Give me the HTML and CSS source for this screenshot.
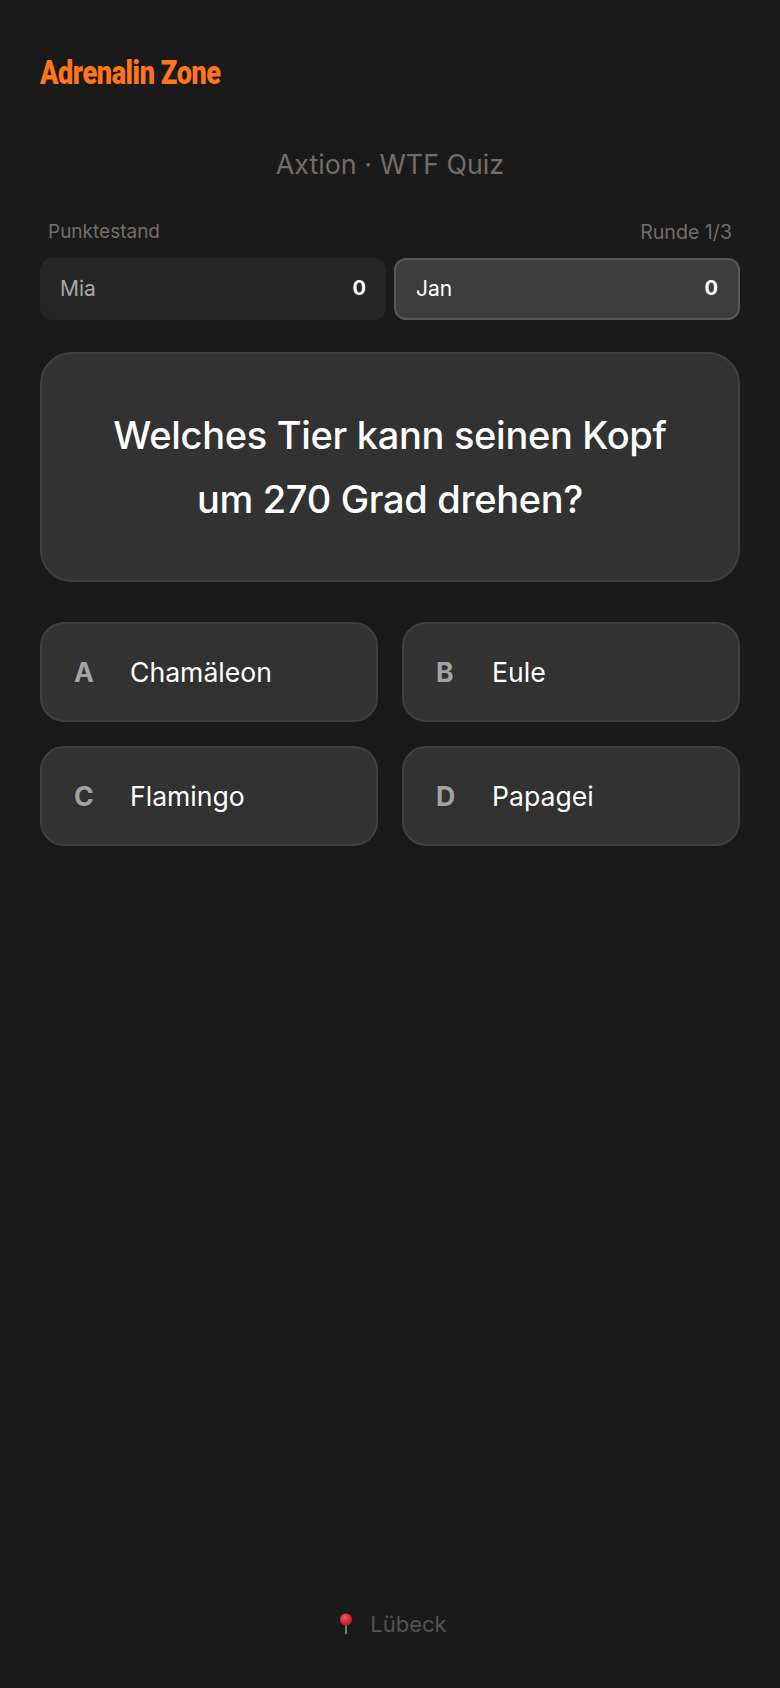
FILE: index.html
```html
<!DOCTYPE html>
<html lang="de">
    <head>
        <meta charset="utf-8" />
        <meta name="viewport" content="width=device-width, initial-scale=1" />
        <title>Adrenalin Zone</title>
        <link rel="stylesheet" href="styles.css">
    </head>
    <body>
        <div class="page">
            <div class="logo">Adrenalin Zone</div>
            <h1 class="game-title">Axtion · WTF Quiz</h1>

            <div class="score-head">
                <span>Punktestand</span>
                <span class="round">Runde 1/3</span>
            </div>
            <div class="scores">
                <div class="score">
                    <span>Mia</span>
                    <span class="points">0</span>
                </div>
                <div class="score active">
                    <span>Jan</span>
                    <span class="points">0</span>
                </div>
            </div>

            <div class="question">Welches Tier kann seinen Kopf<br>um 270 Grad drehen?</div>

            <div class="answers">
                <div class="answer"><span class="letter">A</span><span>Chamäleon</span></div>
                <div class="answer"><span class="letter">B</span><span>Eule</span></div>
                <div class="answer"><span class="letter">C</span><span>Flamingo</span></div>
                <div class="answer"><span class="letter">D</span><span>Papagei</span></div>
            </div>

            <div class="location">
                <svg class="pin" width="14" height="22" viewBox="0 0 14 22">
                    <defs>
                        <radialGradient id="pin-head" cx="0.4" cy="0.35" r="0.7">
                            <stop offset="0" stop-color="#f0555c"/>
                            <stop offset="0.6" stop-color="#d92a32"/>
                            <stop offset="1" stop-color="#a81c24"/>
                        </radialGradient>
                    </defs>
                    <rect x="6" y="10" width="2" height="11" fill="#7c7672"/>
                    <circle cx="7" cy="6.5" r="6" fill="url(#pin-head)"/>
                </svg>
                <span>Lübeck</span>
            </div>
        </div>
    </body>
</html>
```

FILE: styles.css
```css
body, html {
    margin: 0;
    padding: 0;
    background: #1a1a1a;
    font-family: Inter, "Noto Sans", sans-serif;
}

.page {
    box-sizing: border-box;
    height: 1688px;
    padding: 52px 40px 0;
    display: flex;
    flex-direction: column;
}

.logo {
    font-family: Roboto, sans-serif;
    font-size: 33px;
    font-weight: 900;
    line-height: 41px;
    color: #ff7517;
    letter-spacing: -0.5px;
    transform: scaleX(0.82);
    transform-origin: left;
}

.game-title {
    margin: 53px 0 0;
    font-size: 26.8px;
    font-weight: 400;
    line-height: 36px;
    text-align: center;
    color: #716c68;
}

.score-head {
    display: flex;
    justify-content: space-between;
    align-items: center;
    margin-top: 38px;
    padding: 0 8px;
    font-size: 19px;
    line-height: 24px;
    color: #716c68;
}

.round {
    font-size: 19.6px;
}

.scores {
    display: grid;
    grid-template-columns: 1fr 1fr;
    gap: 8px;
    margin-top: 14px;
}

.score {
    box-sizing: border-box;
    height: 62px;
    padding: 0 20px 2px;
    display: flex;
    align-items: center;
    justify-content: space-between;
    background: #262626;
    border-radius: 12px;
    font-size: 21px;
    color: #a8a5a3;
}

.score.active {
    background: #3d3d3d;
    border: 2px solid #575757;
    color: #fff;
}

.points {
    font-size: 20px;
    font-weight: 700;
    color: #fff;
}

.question {
    box-sizing: border-box;
    height: 230px;
    margin-top: 32px;
    display: flex;
    align-items: center;
    justify-content: center;
    text-align: center;
    background: #323232;
    border: 2px solid #3f3f3f;
    border-radius: 32px;
    font-size: 38px;
    font-weight: 450;
    line-height: 64px;
    letter-spacing: -0.3px;
    color: #fff;
}

.answers {
    display: grid;
    grid-template-columns: 1fr 1fr;
    gap: 24px;
    margin-top: 40px;
}

.answer {
    box-sizing: border-box;
    height: 100px;
    padding: 0 32px;
    display: flex;
    align-items: center;
    background: #323232;
    border: 2px solid #3f3f3f;
    border-radius: 24px;
    font-size: 26.6px;
    color: #fff;
}

.letter {
    width: 56px;
    font-weight: 700;
    color: #a3a3a3;
}

.location {
    margin-top: auto;
    margin-bottom: 51px;
    padding-left: 6px;
    display: flex;
    justify-content: center;
    align-items: center;
    gap: 17px;
    font-size: 22px;
    color: #55514e;
}
```
